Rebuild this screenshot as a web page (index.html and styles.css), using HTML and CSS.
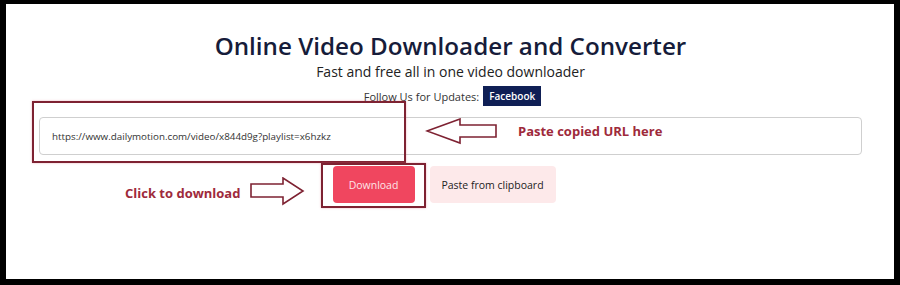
FILE: index.html
```html
<!DOCTYPE html>
<html lang="en">
<head>
    <meta charset="UTF-8">
    <title>Online Video Downloader and Converter</title>
    <link rel="stylesheet" href="styles.css">
</head>
<body>
    <div class="frame">
        <div class="page">
            <h1>Online Video Downloader and Converter</h1>
            <p class="subtitle">Fast and free all in one video downloader</p>
            <div class="follow">
                <span>Follow Us for Updates:</span>
                <a class="fb-btn" href="#">Facebook</a>
            </div>
            <input class="url-input" type="text" value="https://www.dailymotion.com/video/x844d9g?playlist=x6hzkz">
            <div class="actions">
                <button class="btn-download">Download</button>
                <button class="btn-paste">Paste from clipboard</button>
            </div>
        </div>

        <!-- annotations drawn over the page -->
        <div class="mark mark-input"></div>
        <div class="mark mark-download"></div>
        <svg class="arrow arrow-left" width="74" height="28" viewBox="0 0 74 28">
            <polygon points="2,13 35,1 35,7 71,7 71,19 35,19 35,25" />
        </svg>
        <svg class="arrow arrow-right" width="58" height="30" viewBox="0 0 58 30">
            <polygon points="2,7 34,7 34,1 54,14 34,27 34,20 2,20" />
        </svg>
        <div class="note note-url">Paste copied URL here</div>
        <div class="note note-click">Click to download</div>
    </div>
</body>
</html>
```

FILE: styles.css
```css
body {
    margin: 0;
    font-family: "Open Sans", "Noto Sans", Arial, sans-serif;
    background: #fff;
}
.frame {
    position: relative;
    height: 285px;
    box-sizing: border-box;
    border: solid #000;
    border-width: 4px 6px 6px 6px;
    overflow: hidden;
}
.page {
    padding: 26px 32px 0 33px;
    text-align: center;
}
h1 {
    margin: 0;
    font-size: 24.2px;
    line-height: 32px;
    font-weight: 600;
    color: #161c3a;
}
.subtitle {
    margin: 0;
    font-size: 14px;
    line-height: 20px;
    color: #222;
}
.follow {
    margin-top: 4px;
    height: 20px;
    display: flex;
    justify-content: center;
    align-items: center;
    gap: 4px;
    padding-left: 4px;
    font-size: 11px;
    color: #333;
}
.fb-btn {
    display: inline-block;
    background: #0f1f55;
    color: #fff;
    text-decoration: none;
    font-size: 10px;
    font-weight: 600;
    line-height: 20px;
    padding: 0 6px;
}
.url-input {
    display: block;
    width: 100%;
    box-sizing: border-box;
    margin-top: 11px;
    height: 38px;
    padding: 0 12px;
    border: 1px solid #cfcfcf;
    border-radius: 4px;
    font-family: inherit;
    font-size: 9.8px;
    color: #333;
}
.actions {
    margin-top: 11px;
    display: flex;
    justify-content: center;
    gap: 15px;
    padding-right: 13px;
}
.actions button {
    height: 37px;
    border: none;
    border-radius: 4px;
    font-family: inherit;
    font-size: 10.5px;
}
.btn-download {
    width: 82px;
    background: #f0465f;
    color: #fde4e8;
}
.btn-paste {
    width: 126px;
    background: #fde9ea;
    color: #222;
}
.mark {
    position: absolute;
    border: 2px solid #7e2232;
    box-shadow: 0 0 2px rgba(220, 100, 120, 0.5);
}
.mark-input {
    left: 26px;
    top: 97px;
    width: 370px;
    height: 58px;
}
.mark-download {
    left: 315px;
    top: 159px;
    width: 101px;
    height: 41px;
}
.arrow {
    position: absolute;
}
.arrow polygon {
    fill: #fff;
    stroke: #7e2232;
    stroke-width: 1.6;
}
.arrow-left {
    left: 419px;
    top: 114px;
}
.arrow-right {
    left: 243px;
    top: 173px;
}
.note {
    position: absolute;
    font-weight: 700;
    font-size: 13px;
    color: #9e2a3b;
}
.note-url {
    left: 512px;
    top: 118px;
}
.note-click {
    left: 119px;
    top: 180px;
}
```
